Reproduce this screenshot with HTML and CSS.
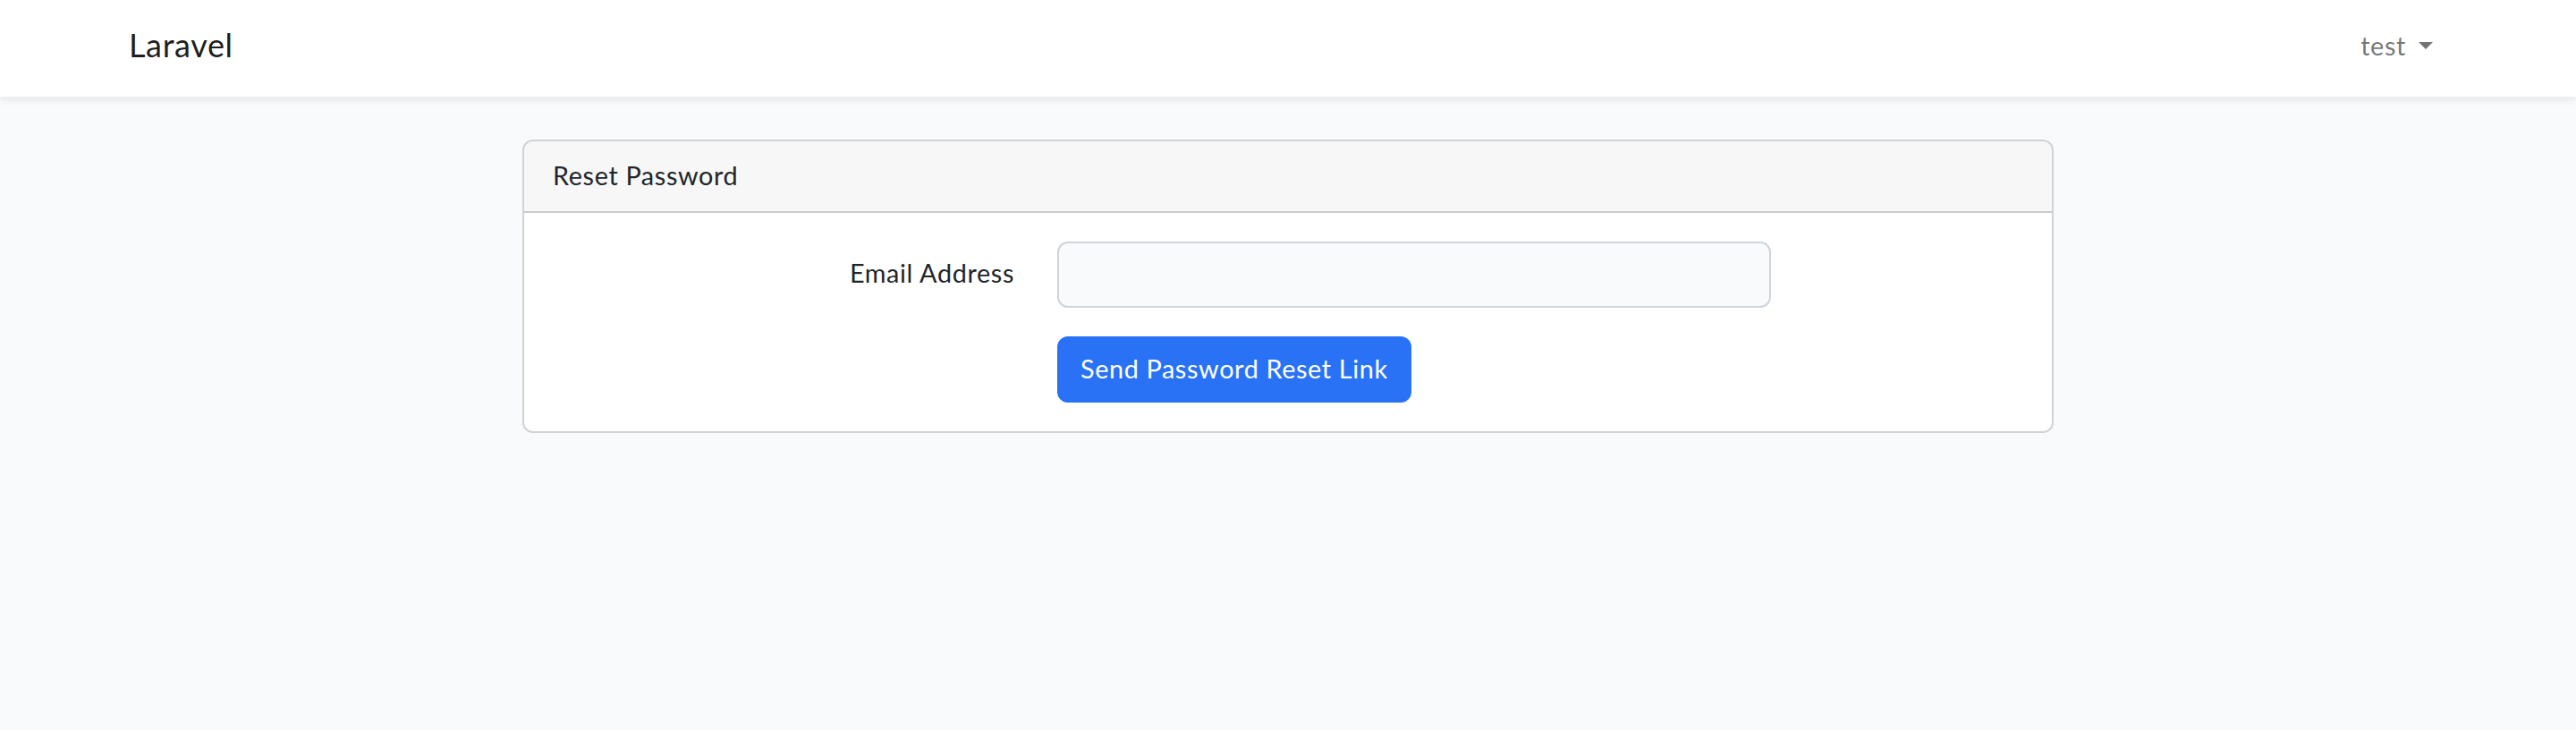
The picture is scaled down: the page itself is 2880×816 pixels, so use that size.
FILE: index.html
```html
<!DOCTYPE html>
<html lang="en">
<head>
<meta charset="utf-8">
<title>Laravel</title>
<link rel="stylesheet" href="styles.css">
</head>
<body>
<nav class="navbar">
  <div class="container nav-inner">
    <a class="brand" href="#">Laravel</a>
    <ul class="nav-right">
      <li><a class="nav-link dropdown-toggle" href="#">test</a></li>
    </ul>
  </div>
</nav>
<main class="main">
  <div class="container">
    <div class="row center">
      <div class="col-8">
        <div class="card">
          <div class="card-header">Reset Password</div>
          <div class="card-body">
            <form class="form">
              <div class="row form-row">
                <label class="col-4 col-label" for="email">Email Address</label>
                <div class="col-6">
                  <input id="email" type="email" class="form-control">
                </div>
              </div>
              <div class="row form-row last">
                <div class="col-6 offset-4">
                  <button type="button" class="btn">Send Password Reset Link</button>
                </div>
              </div>
            </form>
          </div>
        </div>
      </div>
    </div>
  </div>
</main>
</body>
</html>
```
FILE: styles.css
```css
* { box-sizing: border-box; }
html, body { margin: 0; padding: 0; }
body {
  background: #f8fafc;
  color: #212529;
  font-family: "Lato", "Noto Sans", sans-serif;
  font-size: 28.8px;
  line-height: 1.6;
  letter-spacing: 0.022em;
}
.container {
  max-width: 2640px;
  margin: 0 auto;
  padding: 0 24px;
}
.navbar {
  background: #fff;
  height: 108px;
  padding-bottom: 5px;
  box-shadow: 0 4px 8px rgba(0,0,0,0.075);
  display: flex;
  align-items: center;
  position: relative;
}
.nav-inner {
  width: 100%;
  display: flex;
  justify-content: space-between;
  align-items: center;
}
.brand {
  color: rgba(0,0,0,0.9);
  text-decoration: none;
  font-size: 36px;
  line-height: 1.6;
  padding-bottom: 2px;
}
.nav-right {
  list-style: none;
  margin: 0;
  padding: 0;
  display: flex;
}
.nav-link {
  display: block;
  padding: 16px 16px;
  color: rgba(0,0,0,0.55);
  text-decoration: none;
}
.dropdown-toggle::after {
  content: "";
  display: inline-block;
  margin-left: 14px;
  vertical-align: 7px;
  border-top: 8px solid;
  border-right: 8px solid transparent;
  border-left: 8px solid transparent;
  border-bottom: 0;
}
.main { padding: 48px 0; }
.row {
  display: flex;
  flex-wrap: wrap;
  margin: 0 -24px;
}
.row.center { justify-content: center; }
.col-8 { flex: 0 0 66.6667%; max-width: 66.6667%; padding: 0 24px; }
.col-6 { flex: 0 0 50%; max-width: 50%; padding: 0 24px; }
.col-4 { flex: 0 0 33.3333%; max-width: 33.3333%; padding: 0 24px; }
.offset-4 { margin-left: 33.3333%; }
.card {
  background: #fff;
  border: 2px solid rgba(0,0,0,0.175);
  border-radius: 12px;
  overflow: hidden;
}
.card-header {
  padding: 15px 32px 17px;
  background: rgba(0,0,0,0.03);
  border-bottom: 2px solid rgba(0,0,0,0.175);
}
.card-body { padding: 32px; }
.form { margin: 0; }
.form-row { margin-bottom: 32px; }
.form-row.last { margin-bottom: 0; }
.col-label {
  padding-top: 12px;
  padding-bottom: 14px;
  text-align: right;
}
.form-control {
  display: block;
  width: 100%;
  height: 74px;
  padding: 12px 24px;
  font: inherit;
  color: #212529;
  background: #f8fafc;
  border: 2px solid #ced4da;
  border-radius: 12px;
  outline: none;
}
.btn {
  display: inline-block;
  padding: 11px 24px 13px;
  font: inherit;
  line-height: 1.6;
  letter-spacing: 0.022em;
  color: #fff;
  background: #2972f5;
  border: 2px solid #2972f5;
  border-radius: 12px;
  cursor: pointer;
}
```
